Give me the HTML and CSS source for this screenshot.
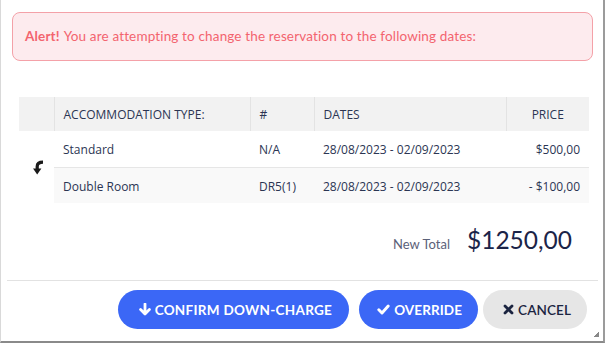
FILE: index.html
```html
<!DOCTYPE html>
<html>
<head>
<meta charset="utf-8">
<link rel="stylesheet" href="styles.css">
</head>
<body>
<div class="modal">
  <div class="modal-body">
    <div class="alert"><strong>Alert!</strong> You are attempting to change the reservation to the following dates:</div>
    <table class="res-table">
      <thead>
        <tr>
          <th class="c-icon"></th>
          <th class="c-type">ACCOMMODATION TYPE:</th>
          <th class="c-num">#</th>
          <th class="c-dates">DATES</th>
          <th class="c-price head-price">PRICE</th>
        </tr>
      </thead>
      <tbody>
        <tr>
          <td class="c-icon" rowspan="2">
            <svg class="turn-icon" width="11" height="15" viewBox="0 0 11 15"><path d="M4.2 10 V6.5 Q4.2 2.2 10 2.2" fill="none" stroke="#1a1a1a" stroke-width="3.2"/><path d="M0 8.6 H8.4 L4.2 14.5 Z" fill="#1a1a1a"/></svg>
          </td>
          <td>Standard</td>
          <td>N/A</td>
          <td>28/08/2023 - 02/09/2023</td>
          <td class="c-price">$500,00</td>
        </tr>
        <tr class="alt">
          <td>Double Room</td>
          <td>DR5(1)</td>
          <td>28/08/2023 - 02/09/2023</td>
          <td class="c-price">- $100,00</td>
        </tr>
      </tbody>
    </table>
    <div class="total">
      <span class="total-label">New Total</span>
      <span class="total-value">$1250,00</span>
    </div>
  </div>
  <div class="modal-footer">
    <button class="btn btn-primary btn-confirm"><svg width="12" height="13" viewBox="0 0 12 13"><path d="M6 1 V10.5 M1.6 6.6 L6 11 L10.4 6.6" fill="none" stroke="#fff" stroke-width="2.8" stroke-linecap="round" stroke-linejoin="round"/></svg>CONFIRM DOWN-CHARGE</button>
    <button class="btn btn-primary btn-override"><svg width="13" height="11" viewBox="0 0 13 11"><path d="M1.8 5.8 L5 9 L11.2 2" fill="none" stroke="#fff" stroke-width="2.9" stroke-linecap="round" stroke-linejoin="round"/></svg>OVERRIDE</button>
    <button class="btn btn-cancel"><svg width="11" height="11" viewBox="0 0 11 11"><path d="M2 2 L9 9 M9 2 L2 9" fill="none" stroke="#1b2440" stroke-width="2.8" stroke-linecap="round"/></svg>CANCEL</button>
    <span class="grip"></span>
  </div>
</div>
</body>
</html>
```

FILE: styles.css
```css
* { box-sizing: border-box; }
html, body { margin: 0; padding: 0; background: #fff; }

.modal {
  width: 605px;
  height: 343px;
  border-left: 1px solid #d9d9d9;
  border-right: 2px solid #9b9b9b;
  border-bottom: 2px solid #8a8a8a;
  background: #fff;
  display: flex;
  flex-direction: column;
  position: relative;
}

.modal-body {
  padding: 12px 5px 0 5px;
  height: 281px;
  border-bottom: 1px solid #e2e2e2;
  margin: 0 5px 0 6px;
}

.alert {
  height: 49px;
  border: 1px solid #f4a1a8;
  background: #fdebee;
  border-radius: 8px;
  padding: 0 12px 2px;
  display: flex;
  align-items: center;
  font-family: "Lato", "DejaVu Sans", sans-serif;
  font-size: 13.5px;
  color: #f3646e;
  letter-spacing: 0.15px;
  white-space: nowrap;
}
.alert strong { font-weight: 700; margin-right: 4px; }

.res-table {
  margin: 36px 0 0 7px;
  width: 570px;
  border-collapse: collapse;
  table-layout: fixed;
  font-family: "Open Sans", "DejaVu Sans", sans-serif;
  font-size: 12px;
  color: #2b3553;
}
.res-table th {
  background: #f2f2f2;
  height: 34px;
  font-weight: 400;
  text-align: left;
  padding: 0 9px;
  border-left: 1px solid #e3e3e3;
}
.res-table th:first-child { border-left: 0; }
.res-table td {
  height: 36px;
  padding: 2px 9px 0;
}
.res-table tbody tr.alt td { background: #f9f9f9; border-top: 1px solid #e6e6e6; }
.res-table td.c-icon { background: #fff; padding: 0; text-align: center; vertical-align: middle; }
.c-icon { width: 35px; }
.c-type { width: 196px; }
.c-num { width: 64px; }
.c-dates { width: 192px; }
.c-price { width: 83px; text-align: right; }
.res-table th.head-price { text-align: center; }
.turn-icon { display: block; margin: 0 0 0 14px; }

.total {
  display: flex;
  justify-content: flex-end;
  align-items: baseline;
  gap: 17px;
  margin-top: 22px;
  padding-right: 21px;
}
.total-label {
  font-family: "Lato", "DejaVu Sans", sans-serif;
  font-size: 13px;
  color: #5b6178;
}
.total-value {
  font-family: "Lato", "DejaVu Sans", sans-serif;
  font-size: 24.5px;
  color: #1b2448;
}

.modal-footer {
  display: flex;
  justify-content: flex-end;
  align-items: center;
  padding: 9px 16px 0 0;
}
.btn {
  height: 39px;
  border: 0;
  border-radius: 20px;
  font-family: "Lato", "DejaVu Sans", sans-serif;
  font-size: 13.5px;
  font-weight: 700;
  display: inline-flex;
  align-items: center;
  gap: 4px;
  padding: 0 16px 0 20px;
  letter-spacing: 0.1px;
}
.btn-primary { background: #3b67f6; color: #fff; }
.btn-confirm { padding: 0 17px 0 21px; letter-spacing: 0.3px; }
.btn-override { margin-left: 10px; padding: 0 16px 0 18px; }
.btn-cancel { background: #e6e6e6; color: #1b2440; margin-left: 5px; padding: 0 16px 0 20px; font-weight: 600; }

.grip {
  position: absolute;
  right: 4px;
  bottom: 4px;
  width: 6px;
  height: 6px;
  background: linear-gradient(135deg, transparent 50%, #888 50%);
}
```
